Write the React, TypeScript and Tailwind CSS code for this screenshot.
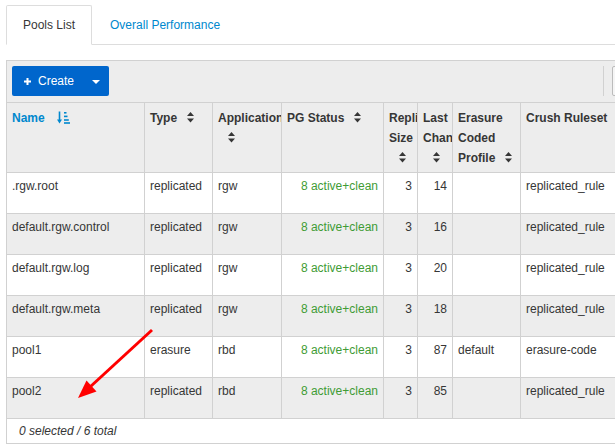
import React from 'react';

type Pool = {
  name: string;
  type: string;
  app: string;
  pg: string;
  size: number;
  last: number;
  ec: string;
  crush: string;
};

const pools: Pool[] = [
  { name: '.rgw.root', type: 'replicated', app: 'rgw', pg: '8 active+clean', size: 3, last: 14, ec: '', crush: 'replicated_rule' },
  { name: 'default.rgw.control', type: 'replicated', app: 'rgw', pg: '8 active+clean', size: 3, last: 16, ec: '', crush: 'replicated_rule' },
  { name: 'default.rgw.log', type: 'replicated', app: 'rgw', pg: '8 active+clean', size: 3, last: 20, ec: '', crush: 'replicated_rule' },
  { name: 'default.rgw.meta', type: 'replicated', app: 'rgw', pg: '8 active+clean', size: 3, last: 18, ec: '', crush: 'replicated_rule' },
  { name: 'pool1', type: 'erasure', app: 'rbd', pg: '8 active+clean', size: 3, last: 87, ec: 'default', crush: 'erasure-code' },
  { name: 'pool2', type: 'replicated', app: 'rbd', pg: '8 active+clean', size: 3, last: 85, ec: '', crush: 'replicated_rule' },
];

const SortIcon = () => (
  <svg width="7" height="11" viewBox="0 0 7 11" className="inline-block ml-[10px] align-[-1px]">
    <path d="M3.5 0 L7 4 L0 4 Z M0 6.5 L7 6.5 L3.5 10.5 Z" fill="#363636" />
  </svg>
);

const SortAmountIcon = () => (
  <svg width="13" height="13" viewBox="0 0 13 13" className="inline-block ml-[12px] align-[-2px]">
    <path d="M2.5 0.5 V10" stroke="#0088ce" strokeWidth="1.6" />
    <path d="M0 8.5 L5 8.5 L2.5 12.5 Z" fill="#0088ce" />
    <rect x="7" y="1" width="2.5" height="1.6" fill="#0088ce" />
    <rect x="7" y="4.6" width="3.5" height="1.6" fill="#0088ce" />
    <rect x="7" y="8.2" width="4.8" height="1.6" fill="#0088ce" />
    <rect x="7" y="11.2" width="6" height="1.6" fill="#0088ce" />
  </svg>
);

const th = 'border-r border-b border-t border-[#d1d1d1] bg-[#ededed] px-[5px] pt-[5px] pb-[4px] align-top text-left font-bold leading-[20px] overflow-hidden';
const td = 'border-r border-b border-[#d1d1d1] px-[5px] pt-[4px] pb-[18px] align-top leading-[18px] overflow-hidden whitespace-nowrap';

export default function App() {
  return (
    <div
      className="relative w-[615px] h-[448px] overflow-hidden bg-white text-[12px] text-[#363636]"
      style={{ fontFamily: '"Liberation Sans", Arial, sans-serif' }}
    >
      {/* Tabs */}
      <div className="ml-[6px] mt-[5px] flex h-[40px] border-b border-[#dddddd]">
        <div className="-mb-px flex h-[40px] items-center rounded-t-[2px] border border-[#dddddd] border-b-white bg-white px-[16px]">
          Pools List
        </div>
        <div className="ml-[2px] flex items-center px-[16px] text-[#0088ce]">Overall Performance</div>
      </div>

      {/* Toolbar */}
      <div className="ml-[6px] mt-[15px] flex w-[609px] items-center overflow-hidden border-l border-t border-[#d1d1d1] bg-[#ededed] pl-[5px] pt-[5px] pb-[6px]">
        <button className="flex h-[30px] w-[97px] items-center rounded-[2px] bg-[#0066cc] pl-[12px] text-white">
          <svg width="7" height="7" viewBox="0 0 7 7">
            <path d="M2.5 0 H4.5 V2.5 H7 V4.5 H4.5 V7 H2.5 V4.5 H0 V2.5 H2.5 Z" fill="#fff" />
          </svg>
          <span className="ml-[7px]">Create</span>
          <svg width="8" height="4" viewBox="0 0 8 4" className="ml-[18px] mt-[2px]">
            <path d="M0 0 L8 0 L4 4 Z" fill="#fff" />
          </svg>
        </button>
        <div className="ml-auto mr-[-35px] flex items-center gap-[8px]">
          <div className="h-[30px] w-px bg-[#d1d1d1]" />
          <div className="h-[30px] w-[38px] rounded-[2px] border border-[#bbbbbb] bg-[#f5f5f5]" />
        </div>
      </div>

      {/* Table */}
      <table className="ml-[6px] table-fixed border-separate border-spacing-0 w-[635px]">
        <colgroup>
          <col className="w-[139px]" />
          <col className="w-[68px]" />
          <col className="w-[69px]" />
          <col className="w-[102px]" />
          <col className="w-[34px]" />
          <col className="w-[35px]" />
          <col className="w-[68px]" />
          <col className="w-[120px]" />
        </colgroup>
        <thead>
          <tr>
            <th className={`${th} border-l text-[#0088ce]`}>
              Name
              <SortAmountIcon />
            </th>
            <th className={th}>
              Type
              <SortIcon />
            </th>
            <th className={th}>
              Application
              <SortIcon />
            </th>
            <th className={th}>
              PG Status
              <SortIcon />
            </th>
            <th className={th}>
              Replica Size
              <SortIcon />
            </th>
            <th className={th}>
              Last Changed
              <SortIcon />
            </th>
            <th className={th}>
              Erasure Coded Profile
              <SortIcon />
            </th>
            <th className={th}>
              Crush Ruleset
              <SortIcon />
            </th>
          </tr>
        </thead>
        <tbody>
          {pools.map((p, i) => {
            const bg = i % 2 === 1 ? 'bg-[#ededed]' : 'bg-white';
            return (
              <tr key={p.name} className={bg}>
                <td className={`${td} border-l`}>{p.name}</td>
                <td className={td}>{p.type}</td>
                <td className={td}>{p.app}</td>
                <td className={`${td} text-right text-[#3f9c35]`}>{p.pg}</td>
                <td className={`${td} text-right`}>{p.size}</td>
                <td className={`${td} text-right`}>{p.last}</td>
                <td className={td}>{p.ec}</td>
                <td className={td}>{p.crush}</td>
              </tr>
            );
          })}
        </tbody>
      </table>

      {/* Footer */}
      <div className="ml-[6px] flex h-[25px] w-[640px] items-center border-b border-l border-[#d1d1d1] pl-[12px] italic">
        0 selected / 6 total
      </div>

      {/* Annotation arrow */}
      <svg className="pointer-events-none absolute left-0 top-0" width="615" height="448">
        <line x1="152" y1="330" x2="90" y2="387" stroke="#ff0000" strokeWidth="3" />
        <path d="M78 398 L86.5 380.5 L96.5 391.5 Z" fill="#ff0000" />
      </svg>
    </div>
  );
}
